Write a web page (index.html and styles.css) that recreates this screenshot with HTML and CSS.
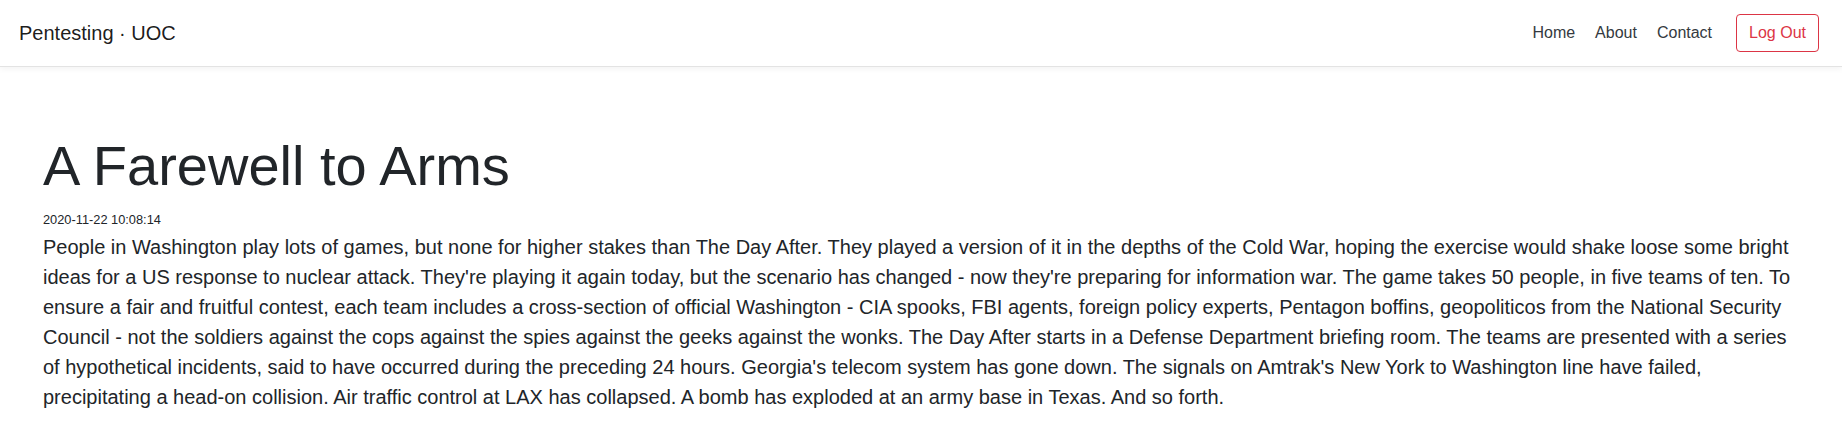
FILE: index.html
```html
<!DOCTYPE html>
<html lang="en">
<head>
<meta charset="utf-8">
<title>Pentesting · UOC</title>
<link rel="stylesheet" href="styles.css">
</head>
<body>
<nav class="navbar">
  <a class="brand" href="#">Pentesting · UOC</a>
  <div class="nav-right">
    <ul class="nav-links">
      <li><a class="nav-link" href="#">Home</a></li>
      <li><a class="nav-link" href="#">About</a></li>
      <li><a class="nav-link" href="#">Contact</a></li>
    </ul>
    <a class="btn-logout" href="#">Log Out</a>
  </div>
</nav>
<main class="content">
  <h1 class="title">A Farewell to Arms</h1>
  <div class="meta"><small>2020-11-22 10:08:14</small></div>
  <p class="lead">People in Washington play lots of games, but none for higher stakes than The Day After. They played a version of it in the depths of the Cold War, hoping the exercise would shake loose some bright ideas for a US response to nuclear attack. They're playing it again today, but the scenario has changed - now they're preparing for information war. The game takes 50 people, in five teams of ten. To ensure a fair and fruitful contest, each team includes a cross-section of official Washington - CIA spooks, FBI agents, foreign policy experts, Pentagon boffins, geopoliticos from the National Security Council - not the soldiers against the cops against the spies against the geeks against the wonks. The Day After starts in a Defense Department briefing room. The teams are presented with a series of hypothetical incidents, said to have occurred during the preceding 24 hours. Georgia's telecom system has gone down. The signals on Amtrak's New York to Washington line have failed, precipitating a head-on collision. Air traffic control at LAX has collapsed. A bomb has exploded at an army base in Texas. And so forth.</p>
</main>
</body>
</html>
```

FILE: styles.css
```css
* {
  box-sizing: border-box;
}

html, body {
  margin: 0;
  padding: 0;
  background: #fff;
}

body {
  font-family: "Liberation Sans", Arial, sans-serif;
  font-size: 16px;
  line-height: 1.5;
  color: #212529;
}

.navbar {
  display: flex;
  align-items: center;
  justify-content: space-between;
  height: 67px;
  padding: 14px 23px 14px 19px;
  border-bottom: 1px solid #e3e3e3;
  box-shadow: 0 2px 6px rgba(0, 0, 0, 0.05);
  background: #fff;
}

.brand {
  font-size: 20px;
  line-height: 30px;
  color: rgba(0, 0, 0, 0.9);
  text-decoration: none;
}

.nav-right {
  display: flex;
  align-items: center;
}

.nav-links {
  display: flex;
  list-style: none;
  margin: 0;
  padding: 0;
}

.nav-link {
  display: block;
  padding: 0 10px;
  line-height: 24px;
  color: #343a40;
  text-decoration: none;
}

.btn-logout {
  display: inline-block;
  margin-left: 14px;
  padding: 6px 12px;
  line-height: 24px;
  border: 1px solid #dc3545;
  border-radius: 4px;
  color: #dc3545;
  text-decoration: none;
}

.content {
  padding: 65px 42px 0 43px;
}

.title {
  margin: 0 0 8px 0;
  font-size: 56px;
  line-height: 1.2;
  font-weight: 400;
}

.meta {
  line-height: 24px;
}

.meta small {
  font-size: 12.8px;
}

.lead {
  margin: 0;
  font-size: 20px;
  line-height: 30px;
}
```
